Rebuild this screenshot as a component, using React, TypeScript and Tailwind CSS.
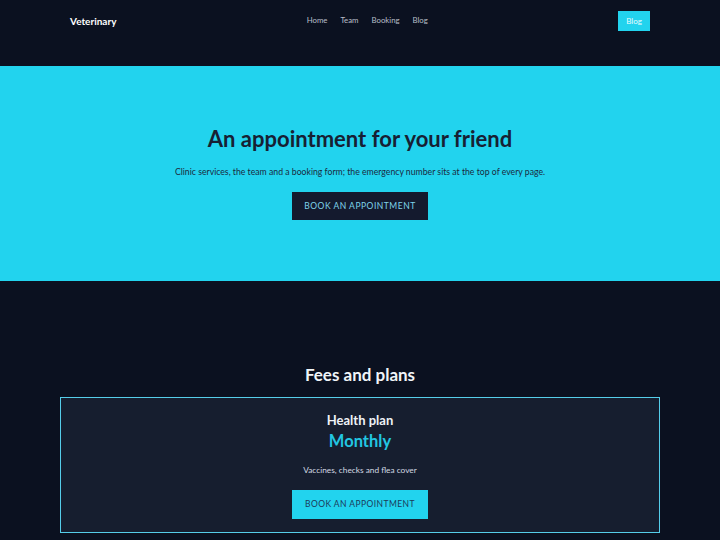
export default function App() {
  const links = ["Home", "Team", "Booking", "Blog"];
  return (
    <div className="min-h-screen w-full bg-[#0b1120] font-['Lato',sans-serif]">
      {/* Header */}
      <header className="h-[66px] px-[70px] pt-[11px]">
        <div className="flex items-start justify-between">
          <div className="flex h-[21px] items-center text-[10px] font-bold text-white">Veterinary</div>
          <nav className="flex h-[20px] items-center gap-[13px] text-[7.8px] text-[#b8bec8]">
            {links.map((l) => (
              <a key={l} href="#">{l}</a>
            ))}
          </nav>
          <button className="flex h-[20px] w-[32px] items-center justify-center bg-[#22d3ee] text-[8px] font-normal text-[#eafcff]">
            Blog
          </button>
        </div>
      </header>

      {/* Hero */}
      <section className="flex h-[215px] flex-col items-center bg-[#22d3ee] pt-[59px]">
        <h1 className="text-[22px] font-bold leading-[28px] text-[#172033]">An appointment for your friend</h1>
        <p className="mt-[13px] text-[8.7px] leading-[12px] text-[#1b2a3e]">
          Clinic services, the team and a booking form; the emergency number sits at the top of every page.
        </p>
        <button className="mt-[14px] flex h-[28px] w-[136px] items-center justify-center bg-[#141a2e] text-[8.5px] tracking-[0.06em] text-[#7fd4ea]">
          BOOK AN APPOINTMENT
        </button>
      </section>

      {/* Fees */}
      <section className="flex flex-col items-center px-[60px] pt-[82px]">
        <h2 className="text-[17px] font-bold leading-[24px] text-[#f1f5f9]">Fees and plans</h2>
        <div className="mt-[10px] flex w-full flex-col items-center border border-[#55cde9] bg-[#161e2f] pb-[13px] pt-[14px]">
          <h3 className="text-[13px] font-bold leading-[16px] text-[#eef2f7]">Health plan</h3>
          <div className="mt-[2px] text-[16.5px] font-bold leading-[22px] text-[#22c6e2]">Monthly</div>
          <p className="mt-[12px] text-[8.3px] leading-[12px] text-[#d3d9e2]">Vaccines, checks and flea cover</p>
          <button className="mt-[14px] flex h-[29px] w-[136px] items-center justify-center bg-[#22d3ee] text-[8.5px] tracking-[0.05em] text-[#1c3a5a]">
            BOOK AN APPOINTMENT
          </button>
        </div>
      </section>
    </div>
  );
}
